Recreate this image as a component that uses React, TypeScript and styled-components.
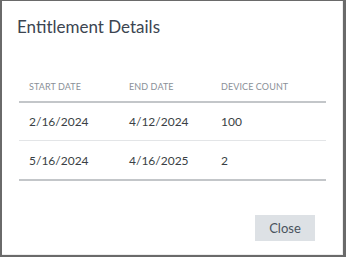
import React from "react";
import styled, { createGlobalStyle } from "styled-components";

const Global = createGlobalStyle`
  html, body { margin: 0; padding: 0; }
  body { background: #6a6a6a; width: 346px; height: 257px; overflow: hidden; font-family: Lato, "Noto Sans", sans-serif; }
`;

const Dialog = styled.div`
  box-sizing: border-box;
  margin: 1px 0 0 2px;
  width: 341px;
  height: 254px;
  background: #fff;
  border-right: 1px solid #eeeeee;
  border-bottom: 1px solid #eeeeee;
  display: flex;
  flex-direction: column;
  padding: 14px 16px 0 17px;
`;

const Title = styled.h2`
  margin: 0 0 0 -2px;
  font-size: 17px;
  font-weight: 400;
  color: #3c4551;
  line-height: 24px;
`;

const Table = styled.div`
  margin-top: 32px;
  display: flex;
  flex-direction: column;
  border-bottom: 2px solid #c3c6c9;
`;

const Row = styled.div<{ $head?: boolean; $last?: boolean }>`
  display: grid;
  grid-template-columns: 100px 92px 1fr;
  padding-left: 10px;
  height: ${(p) => (p.$head ? "32px" : "38px")};
  align-items: center;
  border-bottom: ${(p) =>
    p.$head ? "2px solid #c3c6c9" : p.$last ? "none" : "1px solid #e3e5e7"};
  box-sizing: border-box;
`;

const HeadCell = styled.div`
  font-size: 9px;
  color: #8a9098;
  letter-spacing: 0.1px;
`;

const Cell = styled.div`
  font-size: 12px;
  color: #3a3f45;
`;

const Footer = styled.div`
  display: flex;
  justify-content: flex-end;
  margin-top: 34px;
  padding-right: 11px;
`;

const Button = styled.button`
  width: 60px;
  height: 26px;
  border: none;
  background: #dde1e5;
  color: #4a535d;
  font-family: Lato, "Noto Sans", sans-serif;
  font-size: 13px;
  padding: 0;
`;

const rows = [
  ["2/16/2024", "4/12/2024", "100"],
  ["5/16/2024", "4/16/2025", "2"],
];

export default function App() {
  return (
    <>
      <Global />
      <Dialog>
        <Title>Entitlement Details</Title>
        <Table>
          <Row $head>
            <HeadCell>START DATE</HeadCell>
            <HeadCell>END DATE</HeadCell>
            <HeadCell>DEVICE COUNT</HeadCell>
          </Row>
          {rows.map((r, i) => (
            <Row key={i} $last={i === rows.length - 1}>
              {r.map((c, j) => (
                <Cell key={j}>{c}</Cell>
              ))}
            </Row>
          ))}
        </Table>
        <Footer>
          <Button>Close</Button>
        </Footer>
      </Dialog>
    </>
  );
}
